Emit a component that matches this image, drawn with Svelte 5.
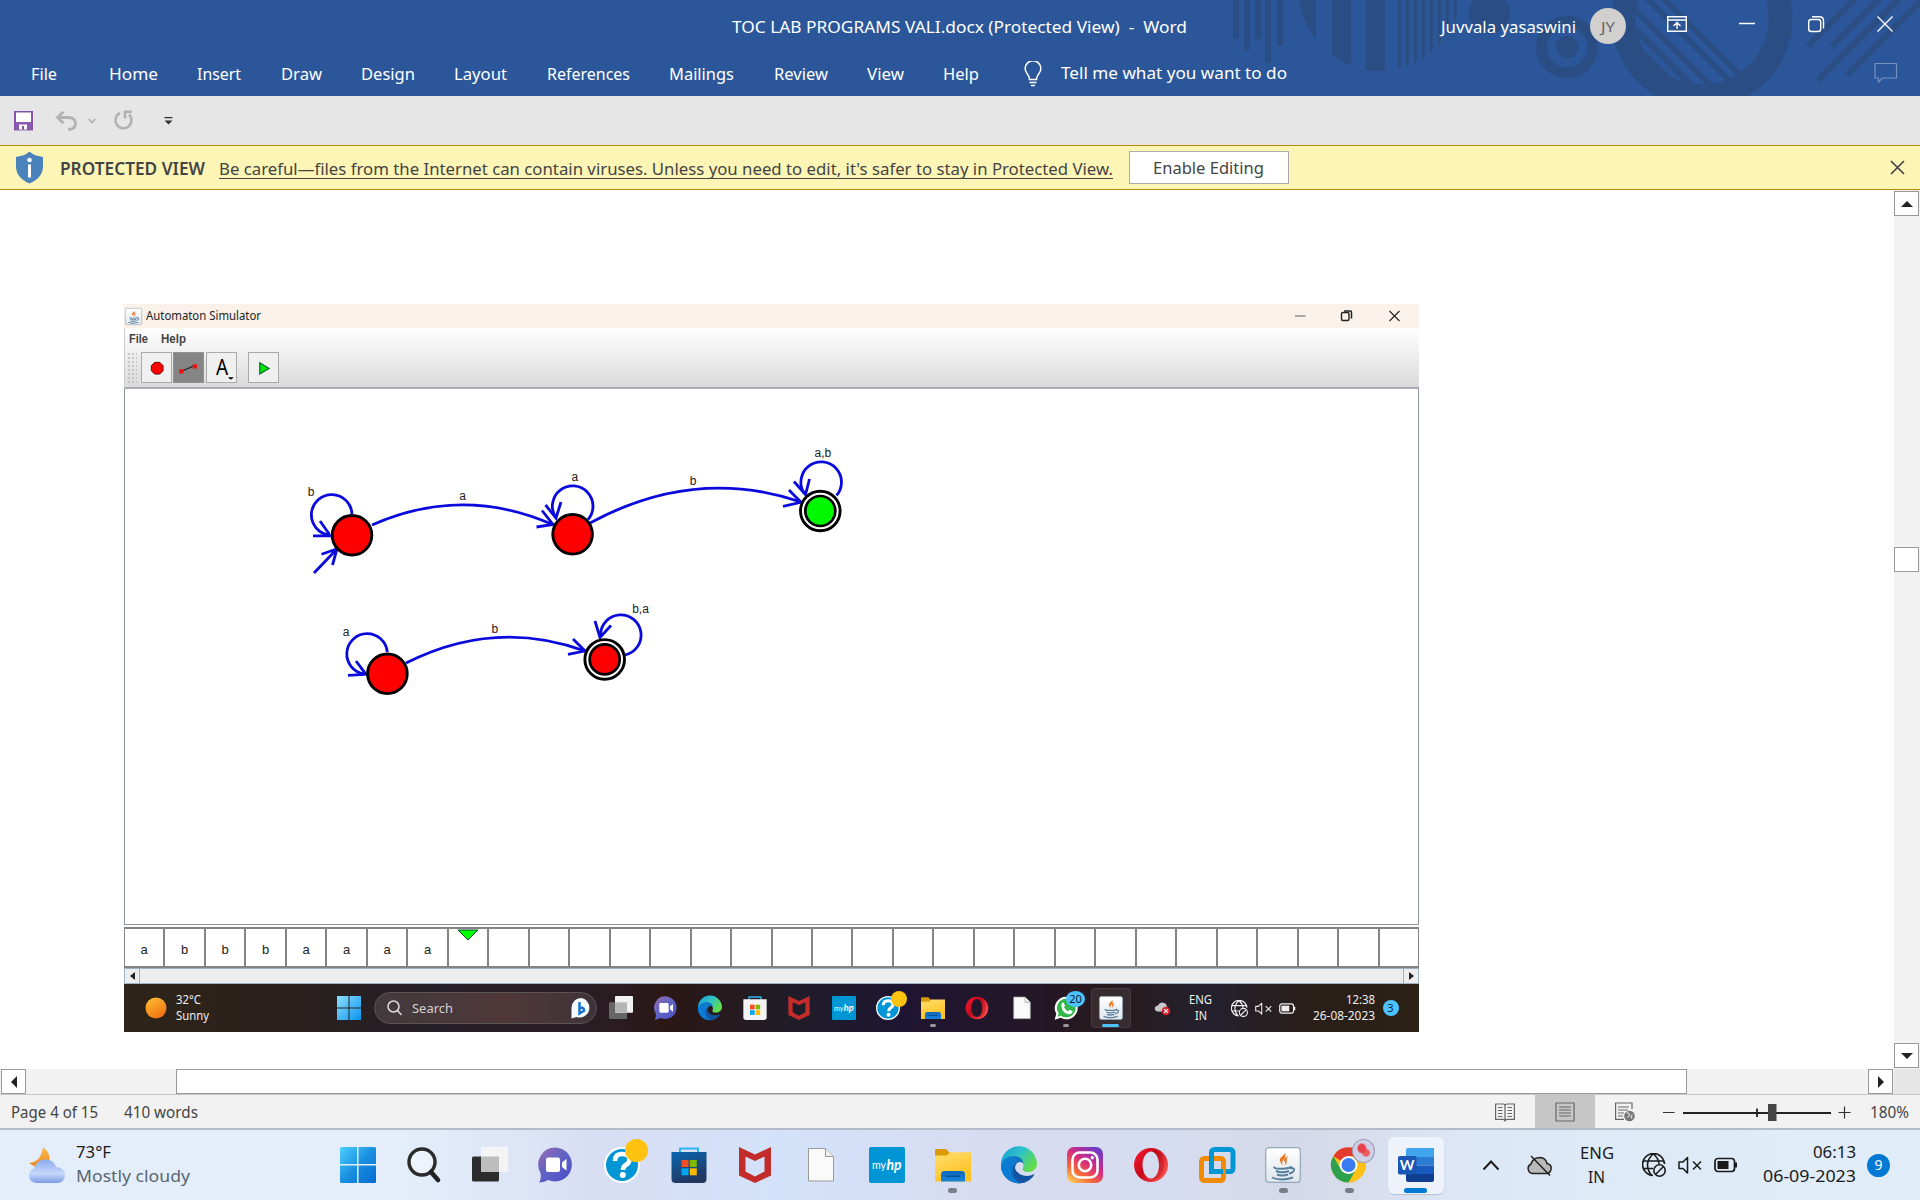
<script>
  // Condenses or widens a one-line label so that it takes exactly `width` pixels.
  function fit(node, width) {
    const apply = () => {
      node.style.transform = 'none';
      node.style.width = 'max-content';
      const natural = node.getBoundingClientRect().width;
      if (!natural) return;
      node.style.width = `${width}px`;
      node.style.transform = `scaleX(${width / natural})`;
    };
    apply();
    requestAnimationFrame(apply);
  }

  const tabs = [
    ['Home', 49], ['Insert', 44], ['Draw', 41], ['Design', 54], ['Layout', 53],
    ['References', 83], ['Mailings', 65], ['Review', 54], ['View', 37], ['Help', 36],
  ];

  const tape = ['a', 'b', 'b', 'b', 'a', 'a', 'a', 'a', ...Array(24).fill('')];

  const innerApps = [
    { icon: 'taskview-dark' }, { icon: 'chat' }, { icon: 'edge' }, { icon: 'store-light' },
    { icon: 'mcafee' }, { icon: 'myhp' }, { icon: 'help', badge: 'gold' }, { icon: 'folder', state: 'open' },
    { icon: 'opera' }, { icon: 'page' }, { icon: 'whatsapp', badge: 'count', state: 'open' }, { icon: 'java', state: 'active' },
  ];

  const apps = [
    { icon: 'windows' }, { icon: 'search' }, { icon: 'taskview' }, { icon: 'chat' },
    { icon: 'help', badge: 'gold' }, { icon: 'store' }, { icon: 'mcafee' }, { icon: 'page' },
    { icon: 'myhp' }, { icon: 'folder', state: 'open' }, { icon: 'edge' }, { icon: 'instagram' },
    { icon: 'opera' }, { icon: 'vmware' }, { icon: 'java', state: 'open' },
    { icon: 'chrome', badge: 'bird', state: 'open' }, { icon: 'word', state: 'active' },
  ];

  const states = [
    { x: 352, y: 535.3, color: '#f00' },
    { x: 572.6, y: 534.3, color: '#f00' },
    { x: 820.3, y: 511, color: '#00f800', final: true },
    { x: 387.4, y: 673.8, color: '#f00' },
    { x: 604.7, y: 659.4, color: '#f00', final: true },
  ];

  const edges = [
    'M352 514.5A20.3 20.3 0 1 0 329 535',
    'M313 535.8H331M320 521L329.5 534.5',
    'M314 573L337 549M321.5 554.3L337 549L332.5 565',
    'M372 525Q462 485 552.5 524.5',
    'M536.5 527L553 524.5L542 510.5',
    'M588 519.5A20.3 20.3 0 1 0 555.5 517',
    'M545.5 505L556 518L561 502',
    'M590 523Q695 466 801 502',
    'M783 506.3L801 502.3L789 490',
    'M836.5 495.5A20.3 20.3 0 1 0 804 493',
    'M794 481.5L805.5 494.5L809.5 479',
    'M387.3 652A20.3 20.3 0 1 0 364 674',
    'M348 675.3L366 674.3L356 661',
    'M406 663Q495 618 585 651',
    'M568 654.3L585 651L573 639',
    'M625 655A20.3 20.3 0 1 0 600.5 635',
    'M595 621L600 637.5L611 625.5',
  ];

  const edgeLabels = [
    [311, 495.5, 'b'], [462.5, 500, 'a'], [574.8, 480.5, 'a'], [693, 484.5, 'b'], [822.8, 457, 'a,b'],
    [346, 635.5, 'a'], [494.8, 632.5, 'b'], [640.5, 613, 'b,a'],
  ];
</script>

{#snippet icon(name)}
  <svg class="icon" viewBox="0 0 36 36">
    {#if name === 'windows'}
      <path fill="url(#winBlue)" d="M1.5 0H17v17H0V1.500Q0 0 1.500 0zM18.500 0H34.500Q36 0 36 1.500V17H18.500zM0 18.500H17V36H1.500Q0 36 0 34.500zM18.500 18.500H36V34.500Q36 36 34.500 36H18.500z" />
    {:else if name === 'search'}
      <circle cx="16" cy="15" r="13" fill="#ffffff66" stroke="#2b2b2b" stroke-width="3.400" />
      <path d="M25 25L32 33" stroke="#222" stroke-width="4.600" stroke-linecap="round" />
    {:else if name === 'taskview'}
      <rect x="0" y="9.500" width="27" height="25" rx="1.500" fill="#2c2c2c" />
      <rect x="9" y="0" width="27" height="25" rx="1.500" fill="#f4f4f4" />
      <rect x="9" y="9.500" width="18" height="15.500" fill="#bdbdbd" />
    {:else if name === 'taskview-dark'}
      <rect x="0" y="9.500" width="27" height="25" rx="1.500" fill="#666" />
      <rect x="9" y="0" width="27" height="25" rx="1.500" fill="#f2f2f2" />
      <rect x="9" y="9.500" width="18" height="15.500" fill="#b5b5b5" />
    {:else if name === 'chat'}
      <path d="M18 .5A17 17 0 1 1 10 33Q6 35.500 1 35.500Q3.500 32 2.500 26A17 17 0 0 1 18 .5z" fill="url(#chat)" />
      <rect x="8" y="10.500" width="14" height="14.500" rx="2" fill="#fff" />
      <path d="M24 15.500L28.500 12V23.500L24 20z" fill="#fff" />
    {:else if name === 'help'}
      <circle cx="18" cy="18" r="17" fill="#0096d6" stroke="#fff" stroke-width="2" />
      <path d="M11 14Q11 7 18 7Q25.500 7 25.500 12.500Q25.500 16 21.500 18.200Q19 19.800 19 23" fill="none" stroke="#fff" stroke-width="4.600" />
      <circle cx="18.800" cy="28" r="3" fill="#fff" />
    {:else if name === 'store' || name === 'store-light'}
      {@const dark = name === 'store'}
      <path d="M9 7V1.500H27V7" fill="none" stroke="#2cb5f2" stroke-width="2" />
      <path d="M.5 5H35.500V32Q35.500 36 31.500 36H4.500Q.5 36 .5 32z" fill={dark ? 'url(#store)' : '#f4f4f4'} />
      <path fill="#f25022" d="M10.500 13h7v7h-7z" /><path fill="#7fba00" d="M18.800 13h7v7h-7z" />
      <path fill="#00a4ef" d="M10.500 21.300h7v7h-7z" /><path fill="#ffb900" d="M18.800 21.300h7v7h-7z" />
    {:else if name === 'mcafee'}
      <path d="M2 0L18 7.500L34 0V28.500L18 36L2 28.500zM8.500 9.500V24.500L18 29.500L27.500 24.500V9.500L18 14z" fill="#c22c2b" fill-rule="evenodd" />
    {:else if name === 'page'}
      <path d="M5.500 1.500H22.500L30.500 9.500V34H5.500z" fill="#fafafa" stroke="#9a9a9a" />
      <path d="M22.500 1.500V9.500H30.500" fill="#eee" stroke="#9a9a9a" />
    {:else if name === 'myhp'}
      <rect width="36" height="36" rx="2" fill="#0096d6" />
      <text x="3" y="22" font-family="Lato" font-size="10.500" fill="#fff" textLength="14" lengthAdjust="spacingAndGlyphs">my</text>
      <text x="17.500" y="23" font-family="Lato" font-size="15" font-weight="bold" font-style="italic" fill="#fff" textLength="15" lengthAdjust="spacingAndGlyphs">hp</text>
    {:else if name === 'folder'}
      <path d="M0 3.500Q0 2 1.500 2H11L14.500 5.500V12H0z" fill="#dc9a06" />
      <path d="M0 8.500H12L15 5.200H36V34.500H0z" fill="url(#folder)" />
      <path d="M6 34.500V27.500Q6 24 9.500 24H26.500Q30 24 30 27.500V34.500z" fill="url(#folderBlue)" />
      <path d="M11 29.200H25" stroke="#0a4f93" stroke-width="1.500" />
    {:else if name === 'edge'}
      <path d="M0 18A18 18 0 0 1 36 16.500C36 21.500 32 25 27 25C22.500 25 20.500 23 22 21C24 17 20 12 14 12C7 12 2 17 0 24z" fill="url(#edgeTop)" />
      <path d="M0 18C1 12 7 9 12.500 9C19 9 22.500 13 22.300 17C22 14.500 15 13 14 21C13.500 28 21 33 28 36L25 35A18 18 0 0 1 0 18z" fill="url(#edgeLeft)" />
      <path d="M13.500 17C9 24 13 34 22 35.700C27 35 32 31 33.500 27C24 32 13 27 13.500 17z" fill="#1154a3" />
      <path d="M0 20A18 18 0 0 0 20 36C13 34 9 28 10 22Q11 17.500 15 14.500Q6 11 0 20z" fill="#0c7bd4" />
    {:else if name === 'instagram'}
      <rect width="36" height="36" rx="7" fill="url(#insta)" />
      <rect x="5.500" y="5.500" width="25" height="25" rx="7" fill="none" stroke="#fff" stroke-width="2.600" />
      <circle cx="18" cy="18" r="6.200" fill="none" stroke="#fff" stroke-width="2.600" />
      <circle cx="25.300" cy="10.700" r="1.700" fill="#fff" />
    {:else if name === 'opera'}
      <path d="M18 1A17 17 0 1 0 18 35A17 17 0 1 0 18 1zM18 4.500C23 4.500 26 11 26 18S23 31.500 18 31.500S9.500 25 9.500 18S13 4.500 18 4.500z" fill="url(#opera)" fill-rule="evenodd" />
      <path d="M18 4.500C28 2 31 10 31 18S27 34 18 31.500C23 31.500 26 25 26 18S23 4.500 18 4.500z" fill="#8e0010" opacity=".25" />
    {:else if name === 'vmware'}
      <rect x="12.500" y="2.500" width="21.500" height="22" rx="3" fill="none" stroke="#0095d3" stroke-width="5" />
      <rect x="2.500" y="11.500" width="22" height="22" rx="3" fill="none" stroke="#f38b00" stroke-width="5" />
      <path d="M12.500 8V24.500H24" fill="none" stroke="#0095d3" stroke-width="5" />
      <path d="M24.500 14V22" stroke="#f38b00" stroke-width="5" />
    {:else if name === 'java'}
      <rect x=".7" y=".7" width="34.600" height="34.600" rx="3" fill="url(#javaBg)" stroke="#8fa7b8" stroke-width="1.200" />
      <path d="M20 4C22 8 13 10 15 14Q16 17 18 18C16 14 19 13 20 10.500Q21 7 20 4zM23 9C19 11 18 13 20 15Q21 16.500 19.500 18.500C24 15.500 20 13.500 23 9z" fill="#e8792b" />
      <path d="M9.500 19.500Q8 22 17 21.700Q25 21.500 27 19.500M11 24Q17 26.500 24 24M12 27.500Q17 29.500 23 27.500M7 30.500Q16 34.500 28 30.500M25.500 21.500Q30 20.500 29 23.500Q28 26 24 26.500" fill="none" stroke="#557d9c" stroke-width="1.900" />
    {:else if name === 'chrome'}
      <circle cx="17.500" cy="18" r="17.500" fill="#fbc116" />
      <path d="M17.500 18L2.300 9.200A17.500 17.500 0 0 1 32.700 9.200H17.500z" fill="#e33b2e" />
      <path d="M17.500 18L9.900 22.400L2.300 9.200A17.500 17.500 0 0 0 17.500 35.500L25 22.400z" fill="#2da14b" />
      <circle cx="17.500" cy="18" r="9" fill="#fff" /><circle cx="17.500" cy="18" r="7" fill="#3a7cf0" />
    {:else if name === 'word'}
      <path d="M10 1H36V10H8V3Q8 1 10 1z" fill="#41a5ee" /><path d="M8 10H36V18.500H8z" fill="#2b7cd3" />
      <path d="M8 18.500H36V27H8z" fill="#185abd" /><path d="M8 27H36V33Q36 35 34 35H10Q8 35 8 33z" fill="#103f91" />
      <rect y="9" width="18.500" height="18.500" rx="1.800" fill="#1a56b4" />
      <text x="9.200" y="23.300" text-anchor="middle" font-family="Lato" font-size="14" font-weight="bold" fill="#fff">W</text>
    {:else if name === 'whatsapp'}
      <path d="M18.500 1A17 17 0 1 1 10 32.700L1 35.500L3.500 26.500A17 17 0 0 1 18.500 1z" fill="#fff" />
      <path d="M18.500 4A14 14 0 1 1 10.500 29.500L5.500 31L7 26A14 14 0 0 1 18.500 4z" fill="#33b74a" />
      <path d="M12 10.500Q14 8.500 15.500 12L16.500 14.500L15 17Q17 21 21.500 23L23.500 20.500L28 23Q27.500 27 23 27.500Q12 26 11 15Q11 12 12 10.500z" fill="#fff" />
    {/if}
  </svg>
{/snippet}

{#snippet appButton(app)}
  <div class="app" class:active={app.state === 'active'}>
    {@render icon(app.icon)}
    {#if app.badge}<span class="badge {app.badge}">{app.badge === 'count' ? '20' : ''}</span>{/if}
    {#if app.state}<i class="mark"></i>{/if}
  </div>
{/snippet}

{#snippet globe()}
  <svg class="tray-ic" viewBox="0 0 24 24" fill="none" stroke="currentColor" stroke-width="1.600">
    <path d="M11 22.500A11 11 0 1 1 22.500 11M11 1Q5.500 6 5.500 12T10 22.500M11.500 1Q17 6 17 11M1.500 8H21.500M1.500 15.500H11" />
    <circle cx="17.500" cy="17.500" r="5.700" /><path d="M13.500 21.500L21.500 13.500" />
  </svg>
{/snippet}
{#snippet speaker()}
  <svg class="tray-ic" viewBox="0 0 24 24" fill="none" stroke="currentColor" stroke-width="1.500">
    <path d="M9.500 4.500L5 9H1V15.500H5L9.500 20z" stroke-linejoin="round" /><path d="M15 8.500L23 16.500M23 8.500L15 16.500" />
  </svg>
{/snippet}
{#snippet battery()}
  <svg class="tray-ic" viewBox="0 0 24 24">
    <rect x="1" y="5.500" width="19.500" height="13" rx="3" fill="none" stroke="currentColor" stroke-width="1.700" />
    <rect x="3.500" y="8" width="11" height="8" fill="currentColor" /><path d="M21 9.500H23V14.500H21z" fill="currentColor" />
  </svg>
{/snippet}

<svg class="defs" width="0" height="0">
  <defs>
    <linearGradient id="winBlue" x2="1" y2="1"><stop stop-color="#4bd0ff" /><stop offset=".5" stop-color="#1a90e0" /><stop offset="1" stop-color="#006bd0" /></linearGradient>
    <linearGradient id="winLight" x2="1" y2="1"><stop stop-color="#8be0ff" /><stop offset="1" stop-color="#0a93ee" /></linearGradient>
    <linearGradient id="chat" x1="0" x2=".8" y2="1"><stop stop-color="#9a6cb0" /><stop offset=".5" stop-color="#6264c4" /><stop offset="1" stop-color="#4b50c8" /></linearGradient>
    <linearGradient id="store" y2="1" x2=".4"><stop stop-color="#0b66b5" /><stop offset="1" stop-color="#21375f" /></linearGradient>
    <linearGradient id="folder" y2="1" x2=".5"><stop stop-color="#ffdf70" /><stop offset="1" stop-color="#fdc120" /></linearGradient>
    <linearGradient id="folderBlue" x2="0" y2="1"><stop stop-color="#0d68bd" /><stop offset="1" stop-color="#1583db" /></linearGradient>
    <linearGradient id="edgeTop" x2="1" y2=".6"><stop stop-color="#169bd8" /><stop offset=".5" stop-color="#2ec2c8" /><stop offset="1" stop-color="#63dc48" /></linearGradient>
    <linearGradient id="edgeLeft" x2="1" y2="1"><stop stop-color="#1187d8" /><stop offset="1" stop-color="#1154a3" /></linearGradient>
    <linearGradient id="insta" x1=".1" y1="1" x2=".8" y2="0"><stop stop-color="#ffd35c" /><stop offset=".3" stop-color="#f7683a" /><stop offset=".6" stop-color="#d42b82" /><stop offset="1" stop-color="#6a3bc8" /></linearGradient>
    <linearGradient id="opera" x2="1" y2=".6"><stop stop-color="#ff1b2d" /><stop offset=".5" stop-color="#c40a1c" /><stop offset="1" stop-color="#ff4b4b" /></linearGradient>
    <linearGradient id="javaBg" x2="0" y2="1"><stop stop-color="#fff" /><stop offset="1" stop-color="#dfe6ec" /></linearGradient>
    <linearGradient id="cloud" x2="0" y2="1"><stop stop-color="#8ba9ee" /><stop offset=".6" stop-color="#c4d8fa" /><stop offset="1" stop-color="#7d9ce6" /></linearGradient>
    <linearGradient id="moon" x2="0" y2="1"><stop stop-color="#f6bd4a" /><stop offset="1" stop-color="#ef8420" /></linearGradient>
    <linearGradient id="sun" x2=".6" y2="1"><stop stop-color="#ffc03a" /><stop offset="1" stop-color="#ef7410" /></linearGradient>
  </defs>
</svg>

<div class="screen">
  <header>
    <svg class="art" width="720" height="96" viewBox="1200 0 720 96">
      <clipPath id="disc"><circle cx="1380" cy="-10" r="81" /></clipPath>
      <clipPath id="hole"><circle cx="1702" cy="18" r="68" /></clipPath>
      <g fill="#2a4d83">
        <path d="M1233 0h6v39h-6zM1244 0h6v50h-6zM1255 0h6v39h-6zM1265 0h6v63h-6zM1277 0h6v46h-6z" />
        <path clip-path="url(#disc)" d="M1298 0h18v90h-18zM1332 0h19v90h-19zM1366 0h19v90h-19zM1398 0h3v90h-3zM1406 0h3v90h-3zM1414 0h3v90h-3zM1422 0h3v90h-3zM1430 0h3v90h-3zM1438 0h3v90h-3zM1446 0h3v90h-3zM1454 0h3v90h-3z" />
        <circle cx="1489.500" cy="13" r="20.500" /><circle cx="1567" cy="47" r="11" />
      </g>
      <g fill="none" stroke="#2a4d83">
        <circle cx="1567" cy="47" r="25.700" stroke-width="10.500" />
        <circle cx="1702" cy="18" r="78.500" stroke-width="24" />
        <path clip-path="url(#hole)" stroke-width="5.600" d="M1640 -25L1760 95M1624 -25L1744 95M1608 -17L1720 95M1590 -16L1700 94M1580 -10L1684 94" />
        <path stroke-width="6.500" d="M1864 -10L1808 46M1888 -10L1832 46M1908 -10L1818 80M1932 -10L1847 75" />
      </g>
    </svg>
    <div class="titlebar">
      <span class="doc" use:fit={455}>TOC LAB PROGRAMS VALI.docx (Protected View)&nbsp; -&nbsp; Word</span>
      <span class="user" use:fit={135}>Juvvala yasaswini</span>
      <span class="avatar"><span use:fit={14}>JY</span></span>
      <svg class="winctl" width="230" height="20" viewBox="1665 13 230 20" fill="none" stroke="#fff" stroke-width="1.400">
        <path d="M1667.700 15.700H1686.300V30.300H1667.700zM1667.700 19H1686.300M1677 28V21.500M1673.500 25L1677 21.500L1680.500 25" />
        <path d="M1739 22.500H1755" stroke-width="1.500" />
        <rect x="1808.700" y="18.500" width="12" height="12" rx="2.500" />
        <path d="M1812 15.700H1819.500Q1823.500 15.700 1823.500 20V27.500" />
        <path d="M1877.500 15.500L1892.500 30.500M1892.500 15.500L1877.500 30.500" />
      </svg>
    </div>
    <nav>
      <span class="file" use:fit={26}>File</span>
      {#each tabs as [label, width]}<span use:fit={width}>{label}</span>{/each}
      <svg class="bulb" width="18" height="26" viewBox="0 0 18 26" fill="none" stroke="#fff" stroke-width="1.500">
        <path d="M5.500 18.500Q5.500 15.500 3 12.500A7.800 7.800 0 1 1 15 12.500Q12.500 15.500 12.500 18.500zM5.500 21.500H12.500M7 24.500H11" />
      </svg>
      <span class="tell" use:fit={226}>Tell me what you want to do</span>
      <svg class="comment" width="24" height="22" viewBox="0 0 24 22" fill="none" stroke="#7590bd" stroke-width="1.200">
        <path d="M1 1.500H22.500V16H8.500L4.500 20V16H1z" />
      </svg>
    </nav>
  </header>

  <div class="qat">
    <svg width="19" height="20" viewBox="0 0 19 20"><rect x=".7" y=".7" width="17.600" height="18" fill="#8a5bb0" stroke="#8450a8" stroke-width="1.400" /><path d="M2 1.500H17V11H2z" fill="#fff" /><path d="M5 13.500H13V18.500H5z" fill="#fff" /><path d="M8 15H10V18.500H8z" fill="#8450a8" /></svg>
    <svg class="undo" width="23" height="20" viewBox="0 0 23 20" fill="none" stroke="#b2b2b2" stroke-width="2.800"><path d="M2 6.500H14Q20.500 7 20.500 12.500T13 18.500M8.500 .8L2.500 6.500L8.500 12.300" /></svg>
    <svg class="chev" width="8" height="6" viewBox="0 0 8 6" fill="none" stroke="#aaa" stroke-width="1.300"><path d="M.7 1L4 4.500L7.300 1" /></svg>
    <svg class="redo" width="21" height="21" viewBox="0 0 21 21" fill="none" stroke="#b2b2b2" stroke-width="2.600"><path d="M7 3A8 8 0 1 0 16 4.500M12 8.500V1.800H19" /></svg>
    <svg class="more" width="9" height="8" viewBox="0 0 9 8"><path d="M.5 0H8.500V1.300H.5zM.5 3.500H8.500L4.500 7.500z" fill="#333" /></svg>
  </div>

  <div class="protected">
    <svg width="29" height="33" viewBox="0 0 29 33"><path d="M14.500 .5Q18 4.500 28 6V15Q28 27 14.500 32.500Q1 27 1 15V6Q11 4.500 14.500 .5z" fill="#4a82bc" /><circle cx="14.500" cy="9" r="2.300" fill="#fff" /><path d="M13 13.500H16V26.500H13z" fill="#fff" /></svg>
    <b use:fit={145}>PROTECTED VIEW</b>
    <span class="warn" use:fit={894}>Be careful—files from the Internet can contain viruses. Unless you need to edit, it's safer to stay in Protected View.</span>
    <button><span use:fit={111}>Enable Editing</span></button>
    <svg class="dismiss" width="15" height="15" viewBox="0 0 15 15"><path d="M1 1L14 14M14 1L1 14" stroke="#444" stroke-width="1.700" /></svg>
  </div>

  <main>
    <div class="page">
      <section class="shot">
        <div class="sim-title">
          {@render icon('java')}
          <span use:fit={115}>Automaton Simulator</span>
          <svg width="106" height="12" viewBox="1295 309.500 106 12" fill="none" stroke="#222" stroke-width="1.100">
            <path d="M1295 315.500H1305.500" stroke="#666" /><rect x="1341.500" y="312" width="7.500" height="8" rx="1.500" stroke-width="1.400" />
            <path d="M1344 310.500H1350.500Q1351.500 310.500 1351.500 312V318" stroke-width="1.500" /><path d="M1389.500 310.500L1399.500 320.500M1399.500 310.500L1389.500 320.500" />
          </svg>
        </div>
        <div class="sim-head">
          <div class="sim-menu"><b use:fit={19}>File</b><b use:fit={25}>Help</b></div>
          <div class="sim-tools">
            <i class="grip"></i>
            <div class="tool"><svg viewBox="0 0 31 31"><path d="M13.500 10H19L22.500 13.500V19L19 22.500H13.500L10 19V13.500z" fill="#f00" stroke="#600" /></svg></div>
            <div class="tool on"><svg viewBox="0 0 31 31"><path d="M8 19.500L22 13.500" stroke="#222" stroke-width="1.300" /><path d="M5.500 17.500h4.500v4.500h-4.500zM20 12h4.500v4.500h-4.500z" fill="#f01010" /></svg></div>
            <div class="tool"><svg viewBox="0 0 31 31"><text x="9.500" y="23.500" textLength="13" lengthAdjust="spacingAndGlyphs" font-family="Noto Sans" font-size="23">A</text><path d="M22.500 26h6l-2 2h-2z" /></svg></div>
            <div class="tool run"><svg viewBox="0 0 31 31"><path d="M11.500 10.500L21.500 16.500L11.500 22.500z" fill="#00e800" stroke="#063" stroke-width="1.200" /></svg></div>
          </div>
        </div>
        <div class="canvas">
          <svg width="1292" height="535" viewBox="125 389 1292 535">
            <g fill="none" stroke="#0a0adc" stroke-width="2.800">
              {#each edges as d}<path {d} />{/each}
            </g>
            {#each states as s}
              <circle cx={s.x} cy={s.y} r="19.800" fill={s.final ? '#fff' : s.color} stroke="#000" stroke-width="2.900" />
              {#if s.final}<circle cx={s.x} cy={s.y} r="15" fill={s.color} stroke="#000" stroke-width="2.700" />{/if}
            {/each}
            <g class="edge-labels">
              {#each edgeLabels as [x, y, label]}<text {x} {y}>{label}</text>{/each}
            </g>
          </svg>
        </div>
        <div class="tape">
          {#each tape as symbol, i}
            <div class="cell">
              {symbol}
              {#if i === 8}<svg class="head" width="22" height="12" viewBox="0 0 22 12"><path d="M1 1H21L11 11z" fill="#0f0" stroke="#143" /></svg>{/if}
            </div>
          {/each}
        </div>
        <div class="sim-scroll"><span class="left"></span><span class="right"></span></div>
        <div class="taskbar dark">
          <svg class="sunny" width="22" height="22" viewBox="0 0 22 22"><circle cx="11" cy="11" r="10.500" fill="url(#sun)" /></svg>
          <div class="weather"><span use:fit={25}>32°C</span><span use:fit={33}>Sunny</span></div>
          <svg class="start" width="24" height="24" viewBox="0 0 24 24"><path fill="url(#winLight)" d="M0 0h11.500v11.500h-11.500zM12.500 0h11.500v11.500h-11.500zM0 12.500h11.500v11.500h-11.500zM12.500 12.500h11.500v11.500h-11.500z" /></svg>
          <div class="searchbox">
            <svg width="15" height="16" viewBox="0 0 15 16" fill="none" stroke="#e0dcdc" stroke-width="1.500"><circle cx="6.500" cy="6.500" r="5.500" /><path d="M10.500 10.500L14.500 15" /></svg>
            <span use:fit={41}>Search</span>
            <svg class="bing" width="20" height="21" viewBox="0 0 20 21"><path d="M10 0A9.800 9.800 0 1 1 5.500 19L.5 20.500V10A9.800 9.800 0 0 1 10 0z" fill="#f6fbff" /><path d="M8.500 4V15.500L13 12.700Q13.500 9.500 9.500 9.500" fill="none" stroke="#1874d0" stroke-width="2.500" /></svg>
          </div>
          <div class="apps">{#each innerApps as app}{@render appButton(app)}{/each}</div>
          <svg class="onedrive" width="18" height="15" viewBox="0 0 18 15"><path d="M1 9Q0 5 4 4.500Q6 0 10.500 2Q13 3 13 6Q16 7 15 11L3 10.500z" fill="#c8c8cc" /><circle cx="12" cy="10" r="4.300" fill="#d8202c" /><path d="M10.200 8.200L13.800 11.800M13.800 8.200L10.200 11.800" stroke="#fff" stroke-width="1.200" /></svg>
          <div class="lang"><span use:fit={23}>ENG</span><span use:fit={12}>IN</span></div>
          <div class="net">{@render globe()}{@render speaker()}{@render battery()}</div>
          <div class="clock"><span use:fit={29}>12:38</span><span use:fit={62}>26-08-2023</span></div>
          <span class="count">3</span>
        </div>
      </section>
    </div>
    <aside class="vscroll"><span class="btn up"></span><span class="thumb"></span><span class="btn down"></span></aside>
  </main>

  <div class="hscroll"><span class="btn prev"></span><span class="thumb"></span><span class="btn next"></span><i></i></div>

  <footer class="status">
    <span class="pg" use:fit={87}>Page 4 of 15</span>
    <span class="wc" use:fit={74}>410 words</span>
    <div class="views">
      <div class="view"><svg width="20" height="20" viewBox="0 0 20 20" fill="none" stroke="#666" stroke-width="1.200"><path d="M.6 2H8Q10 2 10 4Q10 2 12 2H19.400V17.400H12Q10 17.400 10 19.500Q10 17.400 8 17.400H.6zM10 4V18M3 5.500H7.500M3 8.500H7.500M3 11.500H7.500M3 14.500H7.500M12.500 5.500H17M12.500 8.500H17M12.500 11.500H17M12.500 14.500H17" /></svg></div>
      <div class="view on"><svg width="20" height="20" viewBox="0 0 20 20" fill="none" stroke="#666" stroke-width="1.200"><path d="M1 1H19V19H1zM4 5H16M4 8H16M4 11H16M4 14H16" /></svg></div>
      <div class="view"><svg width="20" height="20" viewBox="0 0 20 20" fill="none" stroke="#666" stroke-width="1.200"><path d="M9 17.400H.6V1H17V7M3 5H14M3 8H13M3 11H9M3 14H8" /><circle cx="14.500" cy="14" r="5.300" fill="#777" stroke="none" /><path d="M11.500 11Q14.500 10.500 14.500 13L12.500 15.500M17.500 12.500L16 14.500L17 16.500" stroke="#ddd" /></svg></div>
    </div>
    <svg class="zoom" width="190" height="20" viewBox="1662 1101 190 20" stroke="#333">
      <path d="M1663 1111.500H1674.500M1838.500 1111.500H1850.500M1844.500 1105.500V1117.500" stroke-width="1.200" />
      <path d="M1683 1112H1831M1757 1107.500V1116" stroke-width="1.800" stroke="#222" /><path d="M1768 1103H1776.500V1120H1768z" fill="#444" stroke="none" />
    </svg>
    <span class="pct" use:fit={39}>180%</span>
  </footer>

  <div class="taskbar light">
    <svg class="cloudy" width="38" height="37" viewBox="0 0 38 37">
      <path d="M15 0Q25 8 20 17Q13 25 1 16Q13 15 15 0z" fill="url(#moon)" />
      <path d="M8 36A7.500 7.500 0 0 1 6 21.500Q9 12 18 12.500Q26 13 28 20Q37 20.500 37 28.500Q36.500 35 30 36z" fill="url(#cloud)" />
    </svg>
    <div class="weather"><span use:fit={35}>73°F</span><span class="dim" use:fit={114}>Mostly cloudy</span></div>
    <div class="apps">{#each apps as app}{@render appButton(app)}{/each}</div>
    <svg class="caret" width="18" height="12" viewBox="0 0 18 12"><path d="M1.500 10.500L9 2.500L16.500 10.500" fill="none" stroke="#1a1a1a" stroke-width="1.900" /></svg>
    <svg class="offline" width="26" height="21" viewBox="0 0 26 21"><path d="M6 18.500A5 5 0 0 1 4 9Q6 2.500 13 2.500Q19 3 20 8.500Q25 9.500 24 14.500Q23 18.500 19.500 18.500z" fill="#b9b9b9" stroke="#222" stroke-width="1.500" /><path d="M4 1L23 20.500" stroke="#222" stroke-width="1.500" /></svg>
    <div class="lang"><span use:fit={34}>ENG</span><span use:fit={17}>IN</span></div>
    <div class="net">{@render globe()}{@render speaker()}{@render battery()}</div>
    <div class="clock"><span use:fit={43}>06:13</span><span use:fit={93}>06-09-2023</span></div>
    <span class="count">9</span>
  </div>
</div>

<style>
  :global(body) { margin: 0; overflow: hidden; }
  .screen { width: 1920px; height: 1200px; display: flex; flex-direction: column; background: #fff; overflow: hidden; font: 17px/24px "Noto Sans", "Open Sans", sans-serif; }
  .screen * { box-sizing: border-box; }
  .defs { position: absolute; }
  svg { display: block; flex: none; }
  span, b { display: block; white-space: nowrap; flex: none; transform-origin: left center; }
  b { font-weight: 600; }

  header { position: relative; height: 96px; background: #2b579a; color: #fff; flex: none; }
  .art { position: absolute; right: 0; top: 0; }
  .titlebar { position: relative; display: flex; align-items: center; height: 51px; padding-left: 732px; }
  .doc, .user { margin-top: 2px; }
  .user { margin-left: 254px; }
  .avatar { margin-left: 14px; width: 36px; height: 36px; border-radius: 50%; background: #d2d0ce; color: #666; display: flex; align-items: center; justify-content: center; font-size: 15px; }
  .winctl { margin: -4px 0 0 39px; }
  nav { position: relative; display: flex; align-items: center; height: 46px; gap: 39.4px; padding-left: 31px; }
  .file { margin-right: 12.500px; }
  .bulb { margin-left: 5px; }
  .tell { margin: -2px 0 0 -20.500px; }
  .comment { margin: -2px 0 0 548px; }

  .qat { height: 49px; flex: none; background: #e6e6e6; display: flex; align-items: center; padding-left: 14px; }
  .undo { margin-left: 22px; }
  .chev { margin-left: 10px; }
  .redo { margin-left: 17px; }
  .more { margin-left: 30px; }

  .protected { height: 45px; flex: none; background: #fcf5b5; border: solid #b78b10; border-width: 1px 0; display: flex; align-items: center; padding-left: 15px; color: #444; }
  .protected b { margin: 2px 0 0 16px; }
  .warn { margin: 2px 0 0 14px; text-decoration: underline; text-underline-offset: 3px; text-decoration-thickness: 1px; text-decoration-skip-ink: none; }
  button { margin-left: 16px; width: 160px; height: 33px; background: #fff; border: 1px solid #ababab; display: flex; align-items: center; justify-content: center; font: inherit; color: #444; padding: 0 2px 0 0; }
  .dismiss { margin-left: 600.500px; }

  main { display: flex; height: 879px; flex: none; }
  .page { flex: 1; padding: 114px 0 0 124px; }
  .vscroll, .hscroll { background: #f2f2f2; display: flex; }
  .vscroll { width: 26px; flex-direction: column; padding-top: 1px; }
  .btn, .thumb { width: 25px; height: 25px; background: #fff; border: 1px solid #999; display: flex; align-items: center; justify-content: center; }
  .vscroll .thumb { margin: 331px 0 471px; }
  .btn::after { content: ''; border: 6px solid transparent; }
  .up::after { border-bottom: 6px solid #222; border-top: 0; }
  .down::after { border-top: 6px solid #222; border-bottom: 0; }
  .hscroll { height: 26px; flex: none; border-bottom: 1px solid #c6c6c6; padding-left: 1px; }
  .hscroll .thumb { width: 1511px; margin: 0 181px 0 150px; }
  .prev::after { border-right: 6px solid #222; border-left: 0; }
  .next::after { border-left: 6px solid #222; border-right: 0; }
  .hscroll i { flex: 1; background: #e6e6e6; margin-left: 1px; }

  .shot { width: 1295px; height: 728px; color: #222; }
  .sim-title { height: 24px; background: #f9f1ea; display: flex; align-items: center; padding-left: 1px; font-size: 12.5px; }
  .sim-title .icon { width: 17px; height: 17px; }
  .sim-title span { margin-left: 4px; }
  .sim-title > svg:last-child { margin-left: 1034px; }
  .sim-head { height: 61px; border-bottom: 2px solid #a6abb3; background: linear-gradient(#fff, #dadada); border-left: 1px solid #ccc; }
  .sim-menu { display: flex; gap: 12.500px; padding: 1px 0 0 4px; height: 24px; font: bold 12px/21px "Liberation Sans", sans-serif; color: #444; }
  .sim-tools { display: flex; padding-left: 2px; }
  .grip { width: 10px; height: 32px; margin-right: 3.500px; background: radial-gradient(circle, #bbb 22%, transparent 38%) 0 0 / 4px 4px; }
  .tool { width: 31px; height: 31px; margin-right: 1.600px; background: #f0f0f0; border: 1px solid #a9a9a9; }
  .tool svg { width: 29px; height: 29px; }
  .on.tool { background: #858585; border-color: #929292; }
  .run { margin-left: 9.500px; }
  .canvas { height: 536px; border: 1px solid #8c97a3; border-top: 0; }
  .edge-labels { font: 12px "Liberation Sans", sans-serif; text-anchor: middle; fill: #222; }
  .tape { margin-top: 2px; height: 41px; display: flex; overflow: hidden; border: solid #848484; border-width: 2px 0 2px 1px; }
  .cell { position: relative; width: 40.470px; flex: none; border-right: 2px solid #848484; display: flex; align-items: center; justify-content: center; padding-top: 3px; font: 13px "Liberation Sans", sans-serif; }
  .head { position: absolute; left: 8px; top: 0; }
  .sim-scroll { height: 16px; background: #eee; border: 1px solid #9eb2c6; display: flex; justify-content: space-between; }
  .sim-scroll span { width: 15px; border-right: 1px solid #9eb2c6; display: flex; align-items: center; justify-content: center; }
  .sim-scroll span::after { content: ''; border: 4px solid transparent; }
  .sim-scroll .left::after { border-left: 0; border-right: 5px solid #222; }
  .sim-scroll .right { border-left: 1px solid #9eb2c6; border-right: 0; }
  .sim-scroll .right::after { border-right: 0; border-left: 5px solid #222; }

  .taskbar { display: flex; align-items: center; }
  .apps { display: flex; }
  .app { position: relative; display: flex; align-items: center; justify-content: center; }
  .icon { overflow: visible; position: relative; }
  .badge, .mark { position: absolute; }
  .badge { border-radius: 50%; }
  .gold { background: #ffc20e; }
  .lang, .clock, .weather { display: flex; flex-direction: column; }
  .weather { align-items: flex-start; }
  .lang { align-items: center; }
  .clock { align-items: flex-end; }
  .net { display: flex; }
  .count { border-radius: 50%; display: flex; align-items: center; justify-content: center; }

  .dark { height: 48px; padding-left: 21px; color: #eee; font-size: 12px; line-height: 16px; background: linear-gradient(90deg, #2e2418 0%, #2a211d 12%, #251f27 24%, #2a1c21 38%, #2b1715 42%, #201d29 52%, #1e1532 60%, #241728 70%, #271a1d 76%, #24212e 84%, #291e18 92%, #2c2215); }
  .dark .weather { width: 33px; margin-left: 9px; }
  .start { margin-left: 128px; }
  .searchbox { width: 223px; height: 32px; margin-left: 13px; border-radius: 16px; border: 1px solid #5b5354; background: linear-gradient(90deg, #413a3d, #50383a 60%, #3d3338); display: flex; align-items: center; padding-left: 12px; font-size: 13px; }
  .searchbox span { margin-left: 10px; color: #d5d0d0; }
  .bing { margin-left: 118px; }
  .dark .apps { margin-left: 2px; }
  .dark .app { width: 44.500px; height: 40px; }
  .dark .icon { width: 24px; height: 24px; }
  .dark .active::before { content: ''; position: absolute; inset: 0 2px; background: #ffffff14; border: 1px solid #ffffff12; border-radius: 4px; }
  .dark .mark { bottom: 1px; left: 19px; width: 6px; height: 3px; border-radius: 2px; background: #999; }
  .dark .active .mark { left: 13.500px; width: 17px; background: #4cc2ff; }
  .dark .badge { left: 25px; top: 3px; width: 16px; height: 16px; }
  .dark .badge.count { left: 22px; width: 19px; background: #4cc2ff; color: #123; font-size: 11px; }
  .onedrive { margin-left: 21px; }
  .dark .lang { margin-left: 17px; }
  .dark .net { margin-left: 19px; gap: 7px; }
  .dark .tray-ic { width: 17px; height: 17px; }
  .dark .clock { margin-left: 16.500px; }
  .dark .count:last-child { margin-left: 8px; width: 16px; height: 16px; background: #4cc2ff; color: #123; font-size: 11px; }

  .status { height: 35px; flex: none; background: #f2f2f2; border-bottom: 2px solid #b3bac8; display: flex; align-items: center; padding: 0 0 0 11px; font-size: 15.500px; color: #444; }
  .pg, .wc, .pct { margin-top: 1px; }
  .wc { margin-left: 26px; }
  .views { display: flex; margin-left: 1277px; height: 33px; }
  .view { width: 60px; display: flex; align-items: center; justify-content: center; }
  .view.on { background: #c6c6c6; }
  .zoom { margin-left: 7px; }
  .pct { margin-left: 18px; }

  .light { height: 70px; flex: none; padding-left: 28px; font-size: 17px; color: #1a1a1a; background: linear-gradient(90deg, #e3eefa 0, #e3eefa 400px, #d8def3 600px, #d3e2fa 780px, #d7dcf1 980px, #d6dcef 1180px, #d5d8e8 1300px, #dde8f6 1480px, #e1edf9); }
  .light .weather { margin: -2px 0 0 10px; width: 113px; }
  .dim { color: #5a6570; }
  .light .apps { margin-left: 136px; }
  .light .app { width: 66.100px; height: 57px; }
  .light .icon { width: 36px; height: 36px; }
  .light .active::before { content: ''; position: absolute; inset: 0 5px; background: #eef2fb; border-radius: 6px; box-shadow: 0 1px 1px #b9c2d4; }
  .light .mark { bottom: 1px; left: 28.500px; width: 9px; height: 5px; border-radius: 3px; background: #7a7d86; }
  .light .active .mark { left: 21.500px; width: 23px; background: #0078d7; }
  .light .gold { left: 36px; top: 2px; width: 23px; height: 23px; }
  .bird { left: 36px; top: 2px; width: 23px; height: 24px; background: radial-gradient(ellipse at 42% 38%, #e9404c 20%, transparent 30%), radial-gradient(ellipse at 62% 58%, #ee5a62 16%, transparent 26%), #cfd0e6; border: 1px solid #9a9ab4; }
  .caret { margin-left: 33px; }
  .offline { margin-left: 27px; }
  .light .lang { margin-left: 27px; }
  .light .net { margin-left: 28px; gap: 12px; }
  .tray-ic { width: 24px; height: 24px; }
  .light .clock { margin: -2px 0 0 25px; }
  .light .count { margin-left: 11.500px; width: 23px; height: 23px; background: #0078d4; color: #fff; font-size: 14px; }
</style>
